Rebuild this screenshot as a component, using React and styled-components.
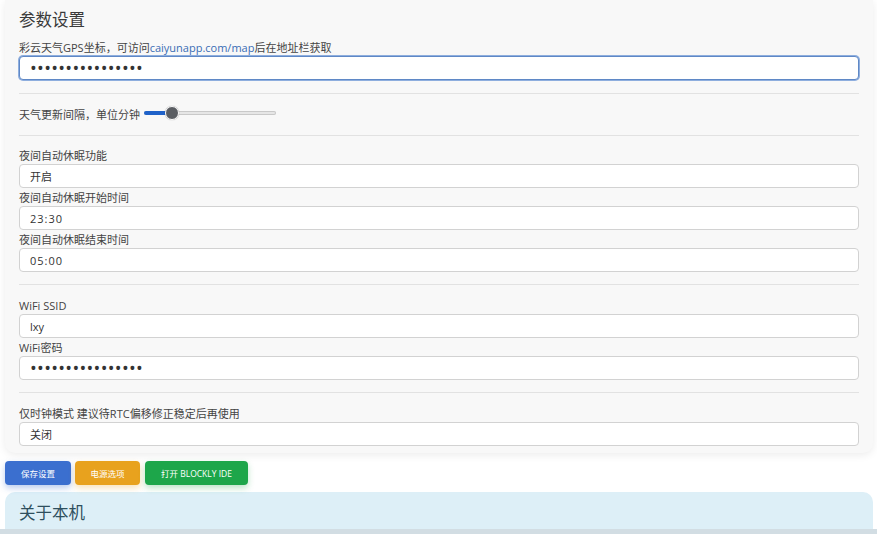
import React from "react";
import styled, { createGlobalStyle } from "styled-components";

const Global = createGlobalStyle`
  html, body { margin: 0; padding: 0; background: #ffffff; }
  body { font-family: "Open Sans", "Noto Sans CJK SC", sans-serif; color: #333; overflow: hidden; }
`;

const Page = styled.div`
  padding: 0 4px 0 5px;
`;

const Card = styled.section`
  background: #f8f8f8;
  border-radius: 0 0 10px 10px;
  box-shadow: 0 2px 8px rgba(0, 0, 0, 0.08);
  padding: 8px 14px 5px;
  display: flex;
  flex-direction: column;
`;

const Title = styled.h2`
  margin: 0 0 8px;
  font-size: 16.5px;
  line-height: 24px;
  font-weight: 400;
  color: #3a3a3a;
`;

const Label = styled.label`
  display: block;
  font-size: 11px;
  line-height: 16px;
  color: #444;
`;

const Link = styled.a`
  color: #3a6db5;
  text-decoration: none;
`;

const Input = styled.input`
  box-sizing: border-box;
  width: 100%;
  height: 24px;
  margin: 0 0 2px;
  padding: 0 10px;
  border: 1px solid ${(p) => (p.$focus ? "#5f88c6" : "#d2d2d2")};
  box-shadow: ${(p) => (p.$focus ? "0 0 0 1px #8eaede" : "none")};
  border-radius: 4px;
  background: #fff;
  font-family: "Open Sans", "Noto Sans CJK SC", sans-serif;
  font-size: ${(p) => (p.type === "password" ? "18px" : "11px")};
  letter-spacing: ${(p) => (p.type === "password" ? "0.3px" : p.$spaced ? "1px" : "0")};
  color: #333;
  outline: none;
`;

const Rule = styled.hr`
  border: 0;
  border-top: 1px solid #e2e2e2;
  margin: ${(p) => p.$m || "10px 0 13px"};
`;

const SliderRow = styled.div`
  display: flex;
  align-items: center;
  height: 20px;
  gap: 4px;
`;

const Track = styled.div`
  position: relative;
  width: 132px;
  height: 4px;
  border-radius: 2px;
  background: #e6e6e6;
  box-shadow: inset 0 0 0 1px #c9c9c9;
  margin-top: -4px;
`;

const Fill = styled.div`
  height: 4px;
  border-radius: 2px;
  background: #1f62c9;
`;

const Thumb = styled.div`
  position: absolute;
  top: 50%;
  width: 12px;
  height: 12px;
  border-radius: 50%;
  background: #5a5d62;
  border: 1px solid #fff;
  box-shadow: 0 0 1px rgba(0,0,0,0.4);
  transform: translate(-50%, -50%);
`;

const Buttons = styled.div`
  display: flex;
  gap: 4px;
  margin-top: 8px;
`;

const Button = styled.button`
  height: 24px;
  width: ${(p) => p.$w}px;
  margin-right: ${(p) => p.$mr || 0}px;
  border: 0;
  border-radius: 4px;
  background: ${(p) => p.$bg};
  color: #fff;
  font-family: "Open Sans", "Noto Sans CJK SC", sans-serif;
  font-size: 8.5px;
  padding: 0;
  box-shadow: 0 3px 6px ${(p) => p.$sh};
`;

const About = styled.section`
  margin-top: 7px;
  background: #ddeff7;
  border-radius: 10px 10px 0 0;
  padding: 9px 14px 20px;
  height: 60px;
`;

const AboutTitle = styled.h2`
  margin: 0;
  font-size: 16.5px;
  line-height: 24px;
  font-weight: 400;
  color: #2f4f5e;
`;

const BottomBar = styled.div`
  position: fixed;
  left: 0;
  right: 0;
  bottom: 0;
  height: 5px;
  background: #d2dde3;
`;

export default function App() {
  const pct = 21;
  return (
    <>
      <Global />
      <Page>
        <Card>
          <Title>参数设置</Title>
          <Label>
            彩云天气GPS坐标，可访问<Link>caiyunapp.com/map</Link>后在地址栏获取
          </Label>
          <Input $focus type="password" readOnly value="0000000000000000" />
          <Rule $m="11px 0 11px" />
          <SliderRow>
            <Label as="span">天气更新间隔，单位分钟</Label>
            <Track>
              <Fill style={{ width: `${pct}%` }} />
              <Thumb style={{ left: `${pct}%` }} />
            </Track>
          </SliderRow>
          <Rule $m="10px 0 12px" />
          <Label>夜间自动休眠功能</Label>
          <Input readOnly value="开启" />
          <Label>夜间自动休眠开始时间</Label>
          <Input $spaced readOnly value="23:30" />
          <Label>夜间自动休眠结束时间</Label>
          <Input $spaced readOnly value="05:00" />
          <Rule />
          <Label>WiFi SSID</Label>
          <Input readOnly value="lxy" />
          <Label>WiFi密码</Label>
          <Input type="password" readOnly value="0000000000000000" />
          <Rule />
          <Label>仅时钟模式 建议待RTC偏移修正稳定后再使用</Label>
          <Input readOnly value="关闭" />
        </Card>
        <Buttons>
          <Button $w={66} $bg="#3b6fcf" $sh="rgba(59,111,207,0.35)">保存设置</Button>
          <Button $w={65} $mr={1} $bg="#e8a21e" $sh="rgba(232,162,30,0.3)">电源选项</Button>
          <Button $w={103} $bg="#1da64a" $sh="rgba(29,166,74,0.3)">打开 BLOCKLY IDE</Button>
        </Buttons>
        <About>
          <AboutTitle>关于本机</AboutTitle>
        </About>
      </Page>
      <BottomBar />
    </>
  );
}
